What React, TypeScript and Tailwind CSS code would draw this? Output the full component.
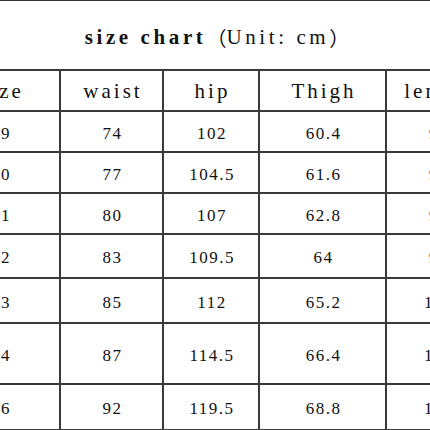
const columns = [
  { label: 'size', width: 'w-[120px]' },
  { label: 'waist', width: 'w-[103px]' },
  { label: 'hip', width: 'w-[96px]' },
  { label: 'Thigh', width: 'w-[127px]' },
  { label: 'length', width: 'w-[104px]' },
]

const rows = [
  { h: 'h-[41px]', cells: ['29', '74', '102', '60.4', '97'] },
  { h: 'h-[41px]', cells: ['30', '77', '104.5', '61.6', '98'] },
  { h: 'h-[41px]', cells: ['31', '80', '107', '62.8', '99'] },
  { h: 'h-[44px]', cells: ['32', '83', '109.5', '64', '99'] },
  { h: 'h-[45px]', cells: ['33', '85', '112', '65.2', '100'] },
  { h: 'h-[61px]', cells: ['34', '87', '114.5', '66.4', '101'] },
  { h: 'h-[46px]', cells: ['36', '92', '119.5', '68.8', '102'] },
]

export default function App() {
  return (
    <div className="h-[430px] w-[430px] overflow-hidden bg-white font-['Liberation_Serif','Noto_Sans_CJK_SC',serif] text-[#111]">
      <div className="h-[1px] w-full bg-[#333]" />
      <div className="flex h-[68px] items-center justify-center pl-[4px] pt-[5px] text-[21px] tracking-[3.6px]">
        <span className="font-bold">size chart</span>
        <span className="font-['Noto_Sans_CJK_SC',sans-serif] text-[20px] tracking-normal">（</span>
        <span>Unit: cm</span>
        <span className="font-['Noto_Sans_CJK_SC',sans-serif] text-[20px] tracking-normal">）</span>
      </div>
      <table className="-ml-[61px] w-[550px] table-fixed border-collapse">
        <colgroup>
          {columns.map((c) => (
            <col key={c.label} className={c.width} />
          ))}
        </colgroup>
        <thead>
          <tr className="h-[41px]">
            {columns.map((c) => (
              <th key={c.label} className="border-2 border-[#3a3a3a] pl-[3px] pt-[3px] text-center text-[21px] font-normal tracking-[3px]">
                {c.label}
              </th>
            ))}
          </tr>
        </thead>
        <tbody>
          {rows.map((r) => (
            <tr key={r.cells[0]} className={r.h}>
              {r.cells.map((v, i) => (
                <td key={i} className="border-2 border-[#3a3a3a] pl-[2px] pt-[4px] text-center text-[17px] tracking-[1.5px]">
                  {v}
                </td>
              ))}
            </tr>
          ))}
        </tbody>
      </table>
    </div>
  )
}
